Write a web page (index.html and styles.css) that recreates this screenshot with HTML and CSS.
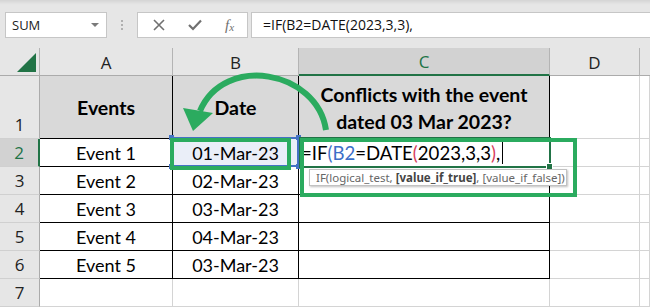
FILE: index.html
```html
<!DOCTYPE html>
<html>
<head>
<meta charset="utf-8">
<link rel="stylesheet" href="styles.css">
</head>
<body>
<div class="page">
  <div class="toolbar">
    <div class="namebox"><span class="nb-text">SUM</span><span class="caret"></span></div>
    <div class="grip"><i></i><i></i><i></i></div>
    <div class="fbtns">
      <svg class="ico" width="12" height="12" viewBox="0 0 12 12"><path d="M1 1 L11 11 M11 1 L1 11" stroke="#707070" stroke-width="1.6" fill="none"/></svg>
      <svg class="ico" width="14" height="12" viewBox="0 0 14 12"><path d="M1 6 L5 10 L13 1.5" stroke="#707070" stroke-width="2.2" fill="none"/></svg>
      <span class="fx">f<sub>x</sub></span>
    </div>
    <div class="fbar">=IF(B2=DATE(2023,3,3),</div>
  </div>

  <div class="sheet">
    <div class="ch corner"><span class="tri"></span></div>
    <div class="ch">A</div>
    <div class="ch">B</div>
    <div class="ch ch-sel">C</div>
    <div class="ch">D</div>
    <div class="ch ch-last"></div>

    <div class="rh rh-tall">1</div>
    <div class="c t hd">Events</div>
    <div class="c t hd">Date</div>
    <div class="c t hd">Conflicts with the event<br>dated 03 Mar 2023?</div>
    <div class="c"></div>
    <div class="c"></div>

    <div class="rh rh-sel">2</div>
    <div class="c t">Event 1</div>
    <div class="c t ref">01-Mar-23</div>
    <div class="c t edit">=IF<span class="blue">(</span><span class="blue">B2</span>=DATE<span class="red">(</span>2023,3,3<span class="red">)</span>,<span class="cursor"></span></div>
    <div class="c"></div>
    <div class="c"></div>

    <div class="rh">3</div>
    <div class="c t">Event 2</div>
    <div class="c t">02-Mar-23</div>
    <div class="c t"></div>
    <div class="c"></div>
    <div class="c"></div>

    <div class="rh">4</div>
    <div class="c t">Event 3</div>
    <div class="c t">03-Mar-23</div>
    <div class="c t"></div>
    <div class="c"></div>
    <div class="c"></div>

    <div class="rh">5</div>
    <div class="c t">Event 4</div>
    <div class="c t">04-Mar-23</div>
    <div class="c t"></div>
    <div class="c"></div>
    <div class="c"></div>

    <div class="rh">6</div>
    <div class="c t">Event 5</div>
    <div class="c t">03-Mar-23</div>
    <div class="c t"></div>
    <div class="c"></div>
    <div class="c"></div>

    <div class="rh">7</div>
    <div class="c"></div>
    <div class="c"></div>
    <div class="c"></div>
    <div class="c"></div>
    <div class="c"></div>
  </div>

  <div class="refsel"><i class="h h1"></i><i class="h h2"></i><i class="h h3"></i><i class="h h4"></i></div>
  <div class="active"><i class="ah"></i></div>
  <div class="mark mark-b"></div>
  <div class="mark mark-c"></div>
  <div class="tip">IF(logical_test, <b>[value_if_true]</b>, [value_if_false])</div>
  <svg class="arrow" width="650" height="307" viewBox="0 0 650 307">
    <path d="M326 130 C317 70 224 54 200 111" stroke="#2bab5f" stroke-width="6" fill="none"/>
    <polygon points="183,108 213,113 193,131" fill="#2bab5f"/>
  </svg>
</div>
</body>
</html>
```

FILE: styles.css
```css
html, body {
  margin: 0;
  padding: 0;
  background: #e6e6e6;
  overflow: hidden;
}
.page {
  position: relative;
  width: 650px;
  height: 307px;
  overflow: hidden;
  font-family: "Open Sans", "Noto Sans", sans-serif;
}
.toolbar {
  height: 48px;
  box-sizing: border-box;
  display: flex;
  align-items: flex-start;
  padding: 12px 0 0 5px;
  background: linear-gradient(#d4d4d4 0, #e4e4e4 4px, #e6e6e6 5px);
}
.namebox {
  width: 102px;
  height: 26px;
  box-sizing: border-box;
  background: #fff;
  border: 1px solid #c6c6c6;
  display: flex;
  align-items: center;
  justify-content: space-between;
  padding: 0 7px 0 6px;
  font-size: 13px;
  color: #222;
}
.caret {
  width: 0; height: 0;
  border-left: 4px solid transparent;
  border-right: 4px solid transparent;
  border-top: 4px solid #7a7a7a;
}
.grip {
  width: 30px;
  height: 26px;
  display: flex;
  flex-direction: column;
  align-items: center;
  justify-content: center;
  gap: 2px;
}
.grip i {
  display: block;
  width: 2px; height: 2px;
  background: #b0b0b0;
}
.fbtns {
  width: 111px;
  height: 26px;
  box-sizing: border-box;
  background: #fff;
  border: 1px solid #c6c6c6;
  display: flex;
  align-items: center;
  padding-left: 15px;
  gap: 23px;
}
.fx {
  font-family: "Liberation Serif", serif;
  font-style: italic;
  font-size: 15px;
  color: #707070;
  line-height: 1;
}
.fx sub { font-size: 11px; vertical-align: -1px; }
.fbar {
  margin-left: 3px;
  flex: 1;
  height: 26px;
  box-sizing: border-box;
  background: #fff;
  border: 1px solid #c6c6c6;
  border-right: none;
  padding-left: 11px;
  font-size: 14px;
  line-height: 24px;
  color: #111;
}

.sheet {
  display: grid;
  grid-template-columns: 40px 133px 126px 251px 90px 10px;
  grid-template-rows: 28px 63px 28px 28px 28px 28px 28px 28px;
  background: #fff;
}
.ch {
  background: #e6e6e6;
  border-right: 1px solid #b4b4b4;
  border-bottom: 1px solid #ababab;
  font-size: 17px;
  color: #222;
  display: flex;
  align-items: center;
  justify-content: center;
  padding-top: 1px;
  box-sizing: border-box;
}
.ch-last { border-right: none; }
.ch-sel {
  background: #d2d2d2;
  color: #217346;
  border-bottom: 2px solid #217346;
}
.corner { position: relative; }
.tri {
  position: absolute;
  left: 17px; top: 5px;
  width: 0; height: 0;
  border-left: 19px solid transparent;
  border-bottom: 19px solid #217346;
}
.rh {
  background: #e6e6e6;
  border-right: 1px solid #ababab;
  border-bottom: 1px solid #d0d0d0;
  font-size: 17px;
  color: #222;
  display: flex;
  align-items: flex-end;
  justify-content: center;
  box-sizing: border-box;
  line-height: 26px;
}
.rh-sel {
  background: #d2d2d2;
  color: #217346;
  border-right: 2px solid #217346;
}
.c {
  border-right: 1px solid #d4d4d4;
  border-bottom: 1px solid #d4d4d4;
  box-sizing: border-box;
  font-family: "Lato", sans-serif;
  font-size: 18px;
  color: #000;
  display: flex;
  align-items: center;
  justify-content: center;
  white-space: nowrap;
}
.t {
  border-right-color: #000;
  border-bottom-color: #000;
}
.hd {
  background: #d9d9d9;
  font-weight: bold;
  font-size: 19.5px;
  text-align: center;
  line-height: 27px;
  padding-top: 1px;
}
.ref { background: #eaeef8; }
.edit {
  justify-content: flex-start;
  padding-left: 2px;
  font-size: 18.6px;
}
.blue { color: #3d6fc8; }
.red { color: #d8405d; }
.cursor {
  display: inline-block;
  width: 1px;
  height: 22px;
  background: #000;
  margin-left: 2px;
}

.refsel {
  position: absolute;
  left: 171px; top: 137px;
  width: 128px; height: 30px;
  box-sizing: border-box;
  border: 2px solid #4472c4;
}
.h {
  position: absolute;
  width: 5px; height: 5px;
  background: #4472c4;
}
.h1 { left: -4px; top: -4px; }
.h2 { right: -4px; top: -4px; }
.h3 { left: -4px; bottom: -4px; }
.h4 { right: -4px; bottom: -4px; }
.active {
  position: absolute;
  left: 299px; top: 137px;
  width: 252px; height: 31px;
  box-sizing: border-box;
  border: 2px solid #217346;
}
.ah {
  position: absolute;
  right: -4px; bottom: -4px;
  width: 5px; height: 5px;
  background: #217346;
  border: 1px solid #fff;
}
.mark {
  position: absolute;
  box-sizing: border-box;
  border: 4px solid #2bab5f;
}
.mark-b { left: 170px; top: 138px; width: 121px; height: 32px; }
.mark-c { left: 300px; top: 138px; width: 277px; height: 59px; }
.tip {
  position: absolute;
  left: 309px; top: 169px;
  width: 258px; height: 17px;
  box-sizing: border-box;
  background: #fff;
  border: 1px solid #c2c2c2;
  box-shadow: 1px 1px 2px rgba(0,0,0,0.25);
  font-family: "Noto Sans", sans-serif;
  font-size: 11.5px;
  line-height: 15px;
  color: #666;
  padding-left: 6px;
  white-space: nowrap;
}
.tip b { color: #444; }
.arrow {
  position: absolute;
  left: 0; top: 0;
  pointer-events: none;
}
```
